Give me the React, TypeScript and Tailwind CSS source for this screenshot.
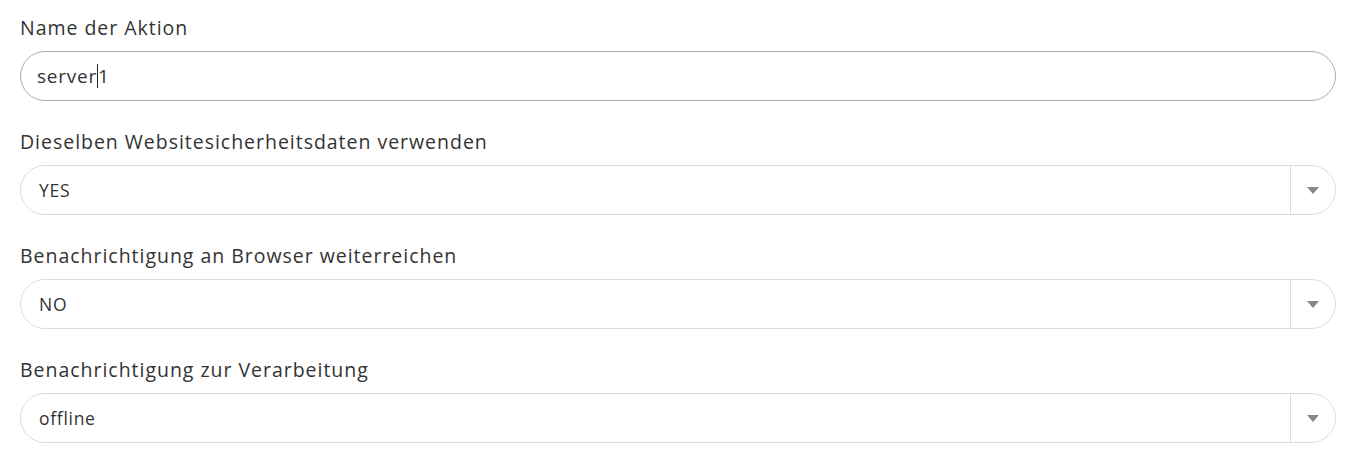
import React from 'react';

const font = { fontFamily: '"Open Sans", "Noto Sans", sans-serif' };

const SelectField: React.FC<{ label: string; value: string }> = ({ label, value }) => (
    <div className="mt-[27px]">
        <label className="block text-[19.5px] leading-[28px] tracking-[0.05em] text-[#333]">{label}</label>
        <div className="mt-[9px] flex h-[50px] items-center rounded-full border border-[#dcdcdc] bg-white">
            <span className="flex-1 pl-[18px] text-[17.5px] tracking-[0.04em] text-[#333]">{value}</span>
            <div className="flex h-full w-[45px] items-center justify-center border-l border-[#dcdcdc]">
                <svg width="12" height="7" viewBox="0 0 12 7"><polygon points="0,0 12,0 6,7" fill="#888" /></svg>
            </div>
        </div>
    </div>
);

const App: React.FC = () => {
    return (
        <div className="min-h-screen bg-white pl-5 pr-[9px] pt-[14px]" style={font}>
            {/* Name der Aktion */}
            <div>
                <label className="block text-[19.5px] leading-[28px] tracking-[0.05em] text-[#333]">Name der Aktion</label>
                <div className="mt-[9px] flex h-[50px] items-center rounded-full border border-[#aaaaaa] bg-white pl-[16px] text-[19px] tracking-[0.04em] text-[#333]">
                    server<span className="inline-block h-[24px] w-px bg-[#222]" />1
                </div>
            </div>
            <SelectField label="Dieselben Websitesicherheitsdaten verwenden" value="YES" />
            <SelectField label="Benachrichtigung an Browser weiterreichen" value="NO" />
            <SelectField label="Benachrichtigung zur Verarbeitung" value="offline" />
        </div>
    );
};

export default App;
